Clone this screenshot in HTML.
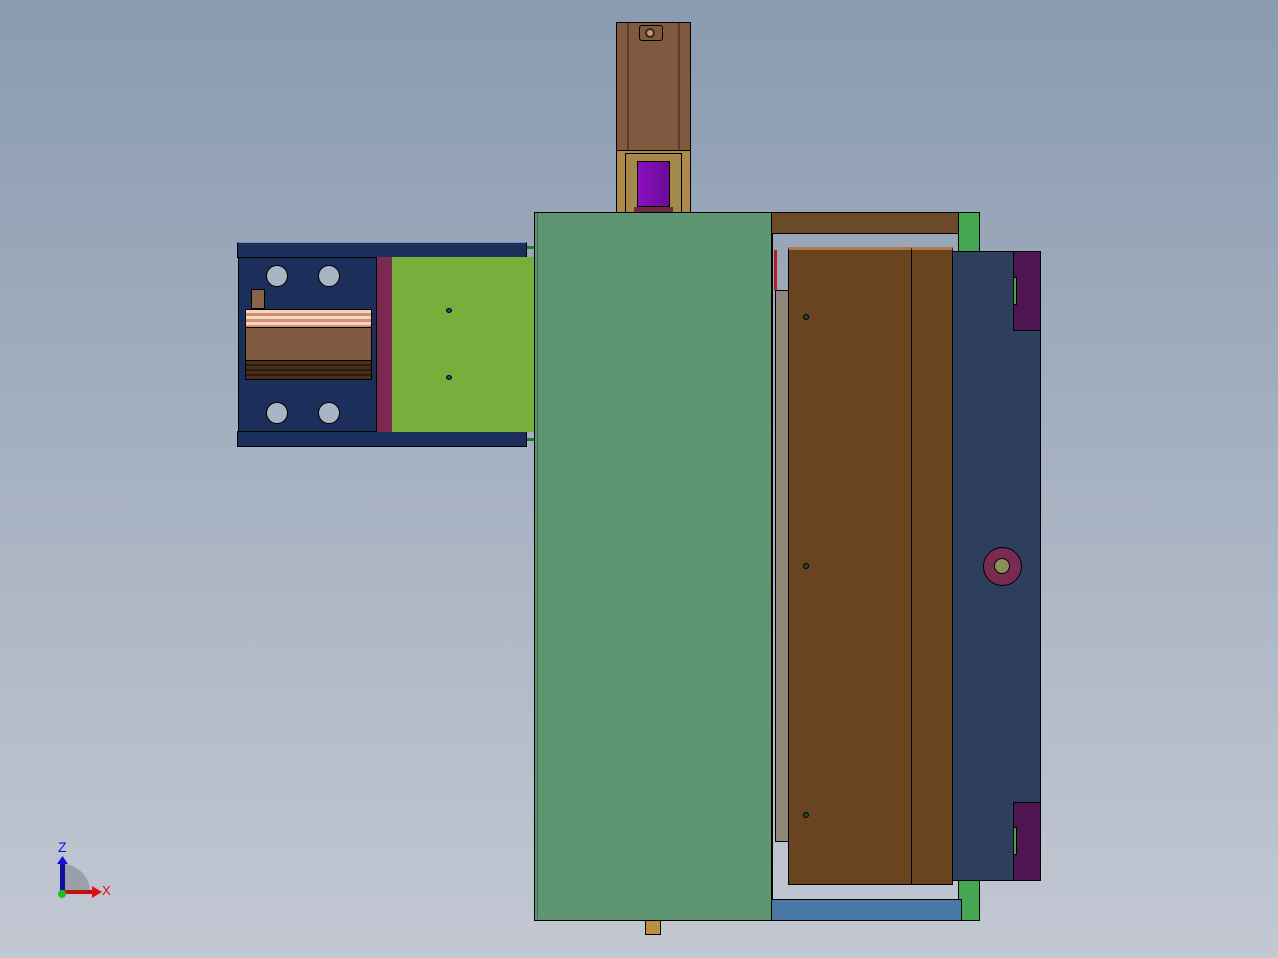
<!DOCTYPE html>
<html><head><style>
body{margin:0;width:1278px;height:958px;overflow:hidden;background:linear-gradient(#8a9bb0,#c3c8d3);position:relative;font-family:"Liberation Sans",sans-serif}
div{position:absolute;box-sizing:border-box}
.b{border:1.5px solid #000}
</style></head><body>
<!-- motor -->
<div class="b" style="left:616px;top:22px;width:75px;height:130px;background:#7f5a40"></div>
<div style="left:627px;top:23px;width:2px;height:128px;background:#5a3c28"></div>
<div style="left:678px;top:23px;width:2px;height:128px;background:#5a3c28"></div>
<div class="b" style="left:639px;top:25px;width:24px;height:16px;border-radius:3px;background:#7f5a40"></div>
<div style="left:645px;top:28px;width:10px;height:10px;border-radius:50%;background:#c89070;border:2px solid #3a2418"></div>
<div class="b" style="left:616px;top:150px;width:75px;height:63px;background:#b08a48"></div>
<div style="left:625px;top:153px;width:57px;height:60px;border:1.5px solid #000;background:#a4884c"></div>
<div style="left:637px;top:161px;width:33px;height:46px;background:linear-gradient(90deg,#8a10c0,#6a0a98);border:1px solid #000"></div>
<div style="left:634px;top:207px;width:39px;height:6px;background:#6a2a40"></div>
<!-- main plate -->
<div class="b" style="left:534px;top:212px;width:238px;height:709px;background:#5e9672"></div>
<div style="left:537px;top:213px;width:1px;height:706px;background:#3c6a4c"></div>
<div style="left:645px;top:920px;width:16px;height:15px;background:#b89040;border:1px solid #000"></div>
<!-- left assembly -->
<div class="b" style="left:237px;top:242px;width:290px;height:16px;background:#1c2e5a;border-top-color:#6a90c8"></div>
<div class="b" style="left:237px;top:431px;width:290px;height:16px;background:#1c2e5a"></div>
<div class="b" style="left:238px;top:257px;width:140px;height:175px;background:#1c2e5a"></div>
<div style="left:376px;top:257px;width:17px;height:175px;background:#7a2a50;border-left:1px solid #000;border-right:1px solid #000"></div>
<div style="left:392px;top:257px;width:142px;height:175px;background:#78ae3c"></div>
<div style="left:527px;top:246px;width:7px;height:3px;background:#2a7a2a"></div>
<div style="left:527px;top:438px;width:7px;height:3px;background:#2a7a2a"></div>
<div style="left:266px;top:265px;width:22px;height:22px;border-radius:50%;background:#a9b4c4;border:1px solid #000"></div>
<div style="left:318px;top:265px;width:22px;height:22px;border-radius:50%;background:#a9b4c4;border:1px solid #000"></div>
<div style="left:266px;top:402px;width:22px;height:22px;border-radius:50%;background:#a9b4c4;border:1px solid #000"></div>
<div style="left:318px;top:402px;width:22px;height:22px;border-radius:50%;background:#a9b4c4;border:1px solid #000"></div>
<div style="left:251px;top:289px;width:14px;height:20px;background:#8a6448;border:1px solid #000"></div>
<div style="left:245px;top:309px;width:127px;height:71px;background:#7f5a40;border:1px solid #000"></div>
<div style="left:245px;top:309px;width:127px;height:19px;background:repeating-linear-gradient(#f6d6c0 0 3px,#d09070 3px 6px);border:1px solid #000"></div>
<div style="left:245px;top:360px;width:127px;height:20px;background:repeating-linear-gradient(#4a2e1c 0 3px,#2a1a10 3px 5px);border:1px solid #000"></div>
<div style="left:446px;top:308px;width:6px;height:5px;border-radius:50%;background:#3a3a9a;border:1px solid #000"></div>
<div style="left:446px;top:375px;width:6px;height:5px;border-radius:50%;background:#3a3a9a;border:1px solid #000"></div>
<!-- right -->
<div class="b" style="left:771px;top:212px;width:191px;height:22px;background:#6a4a28"></div>
<div class="b" style="left:958px;top:212px;width:22px;height:40px;background:#46a652"></div>
<div class="b" style="left:958px;top:879px;width:22px;height:42px;background:#46a652"></div>
<div class="b" style="left:771px;top:899px;width:191px;height:22px;background:#4a78a6"></div>
<div style="left:772px;top:233px;width:1px;height:666px;background:#000"></div>
<div style="left:774px;top:250px;width:3px;height:40px;background:#b02020"></div>
<div style="left:775px;top:290px;width:14px;height:552px;background:#8e8678;border:1px solid #000"></div>
<div class="b" style="left:788px;top:247px;width:124px;height:638px;background:#684420;border-top:3px solid #b07848"></div>
<div class="b" style="left:911px;top:247px;width:42px;height:638px;background:#684420;border-top:3px solid #b07848"></div>
<div class="b" style="left:952px;top:251px;width:89px;height:630px;background:#2e3f5e"></div>
<div class="b" style="left:1013px;top:251px;width:28px;height:80px;background:#4e1550"></div>
<div class="b" style="left:1013px;top:802px;width:28px;height:79px;background:#4e1550"></div>
<div style="left:1013px;top:277px;width:4px;height:28px;background:#46a652;border:1px solid #000"></div>
<div style="left:1013px;top:827px;width:4px;height:28px;background:#46a652;border:1px solid #000"></div>
<div style="left:983px;top:547px;width:39px;height:39px;border-radius:50%;background:#7a2a50;border:1px solid #000"></div>
<div style="left:994px;top:558px;width:16px;height:16px;border-radius:50%;background:#8a8e5a;border:1px solid #000"></div>
<div style="left:803px;top:314px;width:6px;height:6px;border-radius:50%;background:#1a4a3a;border:1px solid #000"></div>
<div style="left:803px;top:563px;width:6px;height:6px;border-radius:50%;background:#1a4a3a;border:1px solid #000"></div>
<div style="left:803px;top:812px;width:6px;height:6px;border-radius:50%;background:#1a4a3a;border:1px solid #000"></div>
<!-- triad -->
<svg style="position:absolute;left:40px;top:830px" width="90" height="80">
<path d="M22 34 A28 28 0 0 1 50 62 L22 62Z" fill="#9aa0aa"/>
<rect x="20" y="34" width="5" height="30" fill="#1010a0"/>
<polygon points="17,34 28,34 22.5,26" fill="#1010e0"/>
<rect x="22" y="60" width="32" height="4" fill="#c01010"/>
<polygon points="52,56 62,62 52,68" fill="#e01010"/>
<circle cx="22" cy="64" r="4" fill="#20c020"/>
<text x="18" y="22" font-size="14" fill="#1010e0" font-family="Liberation Sans">Z</text>
<text x="62" y="65" font-size="13" fill="#e01010" font-family="Liberation Sans">X</text>
</svg>
</body></html>
